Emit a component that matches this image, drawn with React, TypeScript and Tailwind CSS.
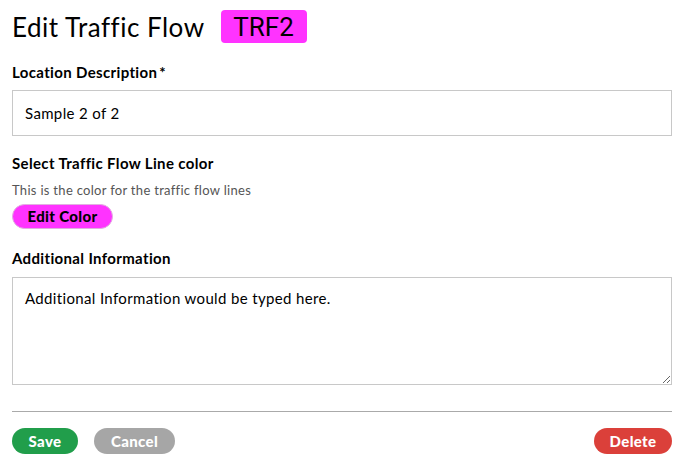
import React from "react";

export default function App() {
  return (
    <div className="w-[684px] h-[470px] bg-white px-3 pt-[10px] text-black tracking-[0.35px]" style={{ fontFamily: "Lato, 'Open Sans', sans-serif" }}>
      <div className="flex items-center h-[33px]">
        <h1 className="text-[26px] leading-none font-normal tracking-[0.5px]">Edit Traffic Flow</h1>
        <span className="ml-4 h-[33px] w-[86px] flex items-center justify-center rounded-[4px] bg-[#ff33ff] text-[26px] leading-none tracking-normal" style={{ fontFamily: "Roboto, sans-serif" }}>TRF2</span>
      </div>
      <div className="mt-[20px] text-[15px] font-bold leading-[18px]">Location Description<span className="ml-[2px]">*</span></div>
      <div className="mt-[9px] h-[46px] border border-[#c8c8c8] flex items-center px-3 text-[15px]">Sample 2 of 2</div>
      <div className="mt-[18px] text-[15px] font-bold leading-[18px]">Select Traffic Flow Line color</div>
      <div className="mt-[10px] text-[13px] text-[#555] leading-[16px] tracking-[0.3px]">This is the color for the traffic flow lines</div>
      <button className="mt-[6px] h-[25px] w-[101px] rounded-full bg-[#ff33ff] border border-[#e0b0e0] text-[15px] font-black flex items-center justify-center">Edit Color</button>
      <div className="mt-[20px] text-[15px] font-bold leading-[18px]">Additional Information</div>
      <textarea
        className="mt-[10px] block w-full h-[108px] border border-[#c8c8c8] px-3 py-[9px] text-[15px] outline-none tracking-[0.35px]"
        defaultValue="Additional Information would be typed here."
        style={{ fontFamily: "Lato, 'Open Sans', sans-serif" }}
      />
      <div className="mt-[26px] border-t border-[#aaa]" />
      <div className="mt-[16px] flex items-center">
        <button className="h-[26px] w-[66px] rounded-full bg-[#219e4b] text-white text-[15px] font-black">Save</button>
        <button className="ml-4 h-[26px] w-[81px] rounded-full bg-[#a6a6a6] text-white text-[15px] font-black">Cancel</button>
        <button className="ml-auto h-[26px] w-[78px] rounded-full bg-[#db403a] text-white text-[15px] font-black">Delete</button>
      </div>
    </div>
  );
}
